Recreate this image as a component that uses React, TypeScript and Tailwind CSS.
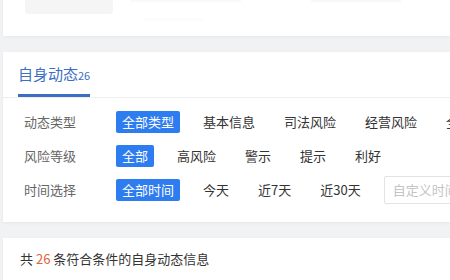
import React from 'react';

const font = { fontFamily: '"Noto Sans CJK SC", "Noto Sans", sans-serif' };

type Row = { label: string; items: string[]; input?: string };

const rows: Row[] = [
  { label: '动态类型', items: ['全部类型', '基本信息', '司法风险', '经营风险', '全部风险'] },
  { label: '风险等级', items: ['全部', '高风险', '警示', '提示', '利好'] },
  { label: '时间选择', items: ['全部时间', '今天', '近7天', '近30天'], input: '自定义时间' },
];

const FilterRow: React.FC<{ row: Row }> = ({ row }) => (
  <div className="flex h-[34px] items-center whitespace-nowrap">
    <div className="w-[92px] shrink-0 text-[13px] text-[#666]">{row.label}</div>
    <div className="flex items-center gap-[17px]">
      {row.items.map((it, i) => (
        <span
          key={it}
          className={
            i === 0
              ? 'rounded-[2px] bg-[#2d7cf0] px-1.5 py-[2px] text-[13px] leading-[18px] text-white'
              : 'px-1.5 text-[13px] leading-[18px] text-[#333]'
          }
        >
          {it}
        </span>
      ))}
      {row.input && (
        <div className="flex h-[28px] w-[140px] shrink-0 items-center rounded-[2px] border border-[#e3e3e3] bg-white px-2 text-[13px] text-[#c4c4c4]">
          {row.input}
        </div>
      )}
    </div>
  </div>
);

export default function App() {
  return (
    <div className="h-[280px] w-[450px] overflow-hidden bg-[#f1f2f4]" style={font}>
      <div className="ml-[3px] h-[36px] bg-white shadow-[0_1px_3px_rgba(0,0,0,0.05)]">
        <div className="flex">
          <div className="ml-[22px] h-[14px] w-[88px] rounded-b-[4px] bg-[#f5f5f5]" />
          <div className="ml-[18px] h-[2px] w-[110px] bg-[#f7faf9]" />
          <div className="ml-[70px] h-[2px] w-[90px] bg-[#f8f8f8]" />
        </div>
        <div className="ml-[140px] mt-[4px] h-[3px] w-[60px] bg-[#fcfcfc]" />
      </div>

      <div className="ml-[3px] mt-[16px] h-[170px] bg-white pt-[11px] shadow-[0_1px_3px_rgba(0,0,0,0.05)]">
        <div className="flex border-b border-[#eeeeee] pl-[15px]">
          <div className="flex items-baseline border-b-[3px] border-[#3b6fc4] pb-[8px] leading-[22px]">
            <span className="text-[15px] font-normal text-[#3b6fc4]">自身动态</span>
            <span className="text-[11px] text-[#3b6fc4]">26</span>
          </div>
        </div>
        <div className="pl-[21px] pt-[7px]">
          {rows.map((r) => (
            <FilterRow key={r.label} row={r} />
          ))}
        </div>
      </div>

      <div className="ml-[3px] mt-[16px] h-[60px] bg-white pl-[17px] pt-[12px] shadow-[0_1px_3px_rgba(0,0,0,0.05)]">
        <div className="text-[13px] leading-[18px] text-[#333]">
          共 <span className="text-[#e0633c]">26</span> 条符合条件的自身动态信息
        </div>
      </div>
    </div>
  );
}
